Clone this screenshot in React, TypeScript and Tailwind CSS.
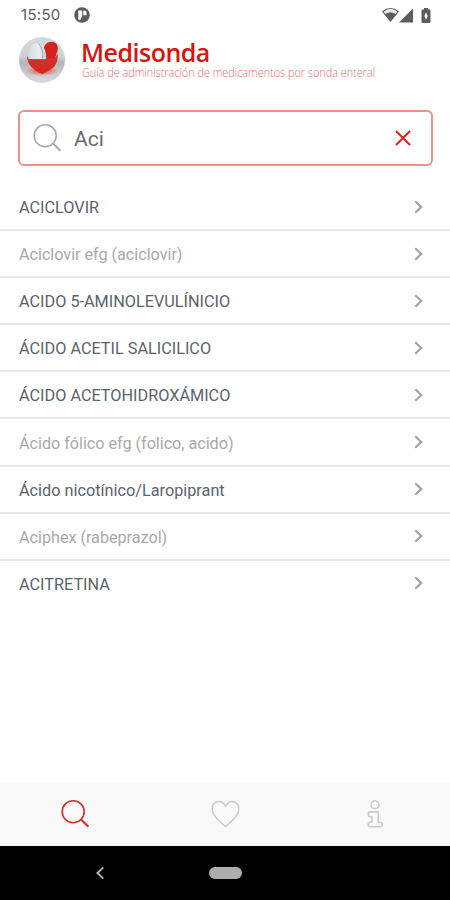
import { useState } from "react";
import clsx from "clsx";

type Medicine = {
  name: string;
  muted?: boolean;
};

const medicines: Medicine[] = [
  { name: "ACICLOVIR" },
  { name: "Aciclovir efg (aciclovir)", muted: true },
  { name: "ACIDO 5-AMINOLEVULÍNICIO" },
  { name: "ÁCIDO ACETIL SALICILICO" },
  { name: "ÁCIDO ACETOHIDROXÁMICO" },
  { name: "Ácido fólico efg (folico, acido)", muted: true },
  { name: "Ácido nicotínico/Laropiprant" },
  { name: "Aciphex (rabeprazol)", muted: true },
  { name: "ACITRETINA" },
];

const SearchIcon = ({ className }: { className?: string }) => (
  <svg
    width="30"
    height="30"
    viewBox="0 0 30 30"
    fill="none"
    stroke="currentColor"
    strokeWidth="1.6"
    className={className}
  >
    <circle cx="13.2" cy="12.7" r="11" />
    <path d="M20.8 20.2l7.6 7.6" strokeWidth="2" />
  </svg>
);

const StatusBar = () => (
  <div className="flex h-[30px] items-center justify-between pr-[19px] pl-[21px] text-[#5c5c5c]">
    <div className="flex items-center gap-[13px]">
      <span className="w-[40px] font-[Inter,sans-serif] text-[15px] leading-[30px] tracking-[0.3px] whitespace-nowrap">
        15:50
      </span>
      <svg width="16" height="16" viewBox="0 0 16 16">
        <circle cx="8" cy="8" r="7.8" fill="currentColor" />
        <path
          d="M4.3 3.6h3.9v6.9H6.8v2.2H4.3zM9.3 3.6h1.2a2 2 0 0 1 2 2v2.6H9.3z"
          fill="#fff"
        />
      </svg>
    </div>
    <div className="flex items-center">
      <svg width="17" height="16" viewBox="0 0 17 16">
        <path d="M0 4.5Q8.5-2.4 17 4.5L8.5 15z" fill="currentColor" />
        <path
          d="M1.6 4.7Q8.500-1 15.400 4.700L13.400 7.100Q8.500 3.600 3.600 7.100z"
          fill="#fff"
          opacity=".85"
        />
      </svg>
      <svg width="14" height="15" viewBox="0 0 14 15">
        <path d="M14 .5V14.5H0z" fill="currentColor" />
      </svg>
      <svg width="10" height="15" viewBox="0 0 10 15" className="ml-[8px]">
        <path
          d="M3 0h4v1.5h1.6q.9 0 .9.9v11.7q0 .9-.9.9H1.4q-.9 0-.9-.9V2.4q0-.9.9-.9H3z"
          fill="currentColor"
        />
        <path d="M5 4.300l1.600 3.700L5 11.700 3.400 8z" fill="#fff" />
      </svg>
    </div>
  </div>
);

const Logo = () => (
  <svg width="46" height="46" viewBox="0 0 46 46" className="shrink-0">
    <defs>
      <linearGradient id="disc" x1="0" y1="0" x2="0" y2="1">
        <stop offset="0" stopColor="#d2d9dc" />
        <stop offset=".42" stopColor="#cdd1d4" />
        <stop offset=".56" stopColor="#b3b5b9" />
        <stop offset=".78" stopColor="#cfcccd" />
        <stop offset="1" stopColor="#d8dbdd" />
      </linearGradient>
      <radialGradient id="glow">
        <stop offset="0" stopColor="#e23a2b" stopOpacity=".9" />
        <stop offset="1" stopColor="#e23a2b" stopOpacity="0" />
      </radialGradient>
      <linearGradient id="bowl" x1="0" y1="0" x2="0" y2="1">
        <stop offset="0" stopColor="#b8453f" />
        <stop offset=".35" stopColor="#cf3028" />
        <stop offset="1" stopColor="#d8241d" />
      </linearGradient>
      <linearGradient id="pill" x1="0" y1="0" x2="1" y2="0">
        <stop offset="0" stopColor="#d3dce0" />
        <stop offset=".6" stopColor="#e8eef0" />
        <stop offset="1" stopColor="#c6cfd4" />
      </linearGradient>
    </defs>
    <circle cx="23" cy="23" r="23" fill="url(#disc)" />
    <ellipse cx="23" cy="34" rx="17" ry="5" fill="url(#glow)" />
    <path
      d="M8 19l3 3.500h24l3.500-6q1 8-3.500 13.500Q29.500 34.500 23.300 37 16 34 12 29.500 8 25 8 19z"
      fill="url(#bowl)"
    />
    <path
      d="M24.500 12C25.500 7.500 28.500 4.700 32.300 4.700c5.400 0 7.600 4.800 6 9.800L35.500 22.500H26z"
      fill="#d5231c"
    />
    <path
      d="M9.500 22.300C8.500 13 11.500 6 17.500 5.900c6.400 0 10 6.600 9.700 16.400z"
      fill="url(#pill)"
    />
    <path
      d="M19.500 6.300q4.700 5.200 4.200 15"
      fill="none"
      stroke="#8d999f"
      strokeWidth=".8"
    />
    <path d="M10 22.500h25" fill="none" stroke="#9a4a48" strokeWidth=".8" />
  </svg>
);

const Header = () => (
  <header className="flex h-[60px] items-start pt-[7px] pl-[19px]">
    <Logo />
    <div className="ml-[16px] font-['Open_Sans',sans-serif] whitespace-nowrap">
      <h1 className="text-[25px] leading-[30px] font-semibold tracking-[-0.5px] text-[#d9140f]">
        Medisonda
      </h1>
      <p className="origin-left scale-x-[0.905] pl-[1px] text-[12px] leading-[12px] font-light text-[#ea6a68]">
        Guía de administración de medicamentos por sonda enteral
      </p>
    </div>
  </header>
);

const BottomTabs = () => (
  <nav className="grid h-[64px] shrink-0 grid-cols-3 bg-[#f9f9f9] text-[#cbcbcb]">
    <button className="flex items-center justify-center text-[#dc2b25]">
      <SearchIcon />
    </button>
    <button className="flex items-center justify-center">
      <svg
        width="30"
        height="28"
        viewBox="0 0 30 28"
        fill="none"
        stroke="currentColor"
        strokeWidth="1.5"
      >
        <path
          d="M15.5 26.5C8.5 20.5 2.2 15 2.2 8.7c0-4.1 2.8-7.1 6.5-7.1 3 0 5.4 1.7 6.8 4.8 1.4-3.1 3.8-4.8 6.8-4.8 3.7 0 6.5 3 6.5 7.1 0 6.3-6.3 11.8-13.3 17.8z"
          strokeLinejoin="round"
        />
      </svg>
    </button>
    <button className="flex items-center justify-center">
      <svg
        width="16"
        height="28"
        viewBox="0 0 16 28"
        fill="none"
        stroke="currentColor"
        strokeWidth="1.6"
        strokeLinejoin="round"
      >
        <circle cx="7.9" cy="4.7" r="3.9" />
        <path d="M2.9 11.9h8.3v10.3h2.4q1.7 0 1.7 2.3t-1.7 2.3H2.9q-1.7 0-1.7-2.3t1.7-2.3h2V16.500h-2q-1.700 0-1.700-2.300t1.700-2.300z" />
      </svg>
    </button>
  </nav>
);

const SystemNav = () => (
  <div className="grid h-[54px] shrink-0 grid-cols-[200px_50px_200px] items-center bg-black">
    <svg
      width="8"
      height="14"
      viewBox="0 0 8 14"
      className="ml-[96px]"
      fill="none"
      stroke="#b5b5b5"
      strokeWidth="1.9"
    >
      <path d="M7.3 1.4L1.5 7l5.8 5.6" />
    </svg>
    <div className="ml-[9px] h-[12px] w-[33px] rounded-full bg-[#adadad]" />
  </div>
);

const App = () => {
  const [query, setQuery] = useState("Aci");

  return (
    <div className="flex h-[900px] w-[450px] flex-col overflow-hidden bg-white font-[Roboto,sans-serif]">
      <StatusBar />
      <Header />
      <div className="mr-[17px] ml-[18px] mt-[20px] flex h-[56px] shrink-0 items-center rounded-[6px] border-2 border-[#ec908d] pr-[20px] pl-[12px]">
        <SearchIcon className="shrink-0 text-[#a9a9a9]" />
        <input
          value={query}
          onChange={(e) => setQuery(e.target.value)}
          className="ml-[12px] w-full min-w-0 pt-[3px] text-[21px] text-[#666b73] outline-none"
        />
        <button onClick={() => setQuery("")} className="shrink-0">
          <svg
            width="16"
            height="16"
            viewBox="0 0 16 16"
            stroke="#e0201b"
            strokeWidth="2"
          >
            <path d="M1 1l14 14M15 1L1 15" />
          </svg>
        </button>
      </div>
      <ul className="mt-[18px] flex-1">
        {medicines.map((medicine) => (
          <li
            key={medicine.name}
            className="flex h-[47.1px] items-center justify-between border-b-2 border-[#e8e8e8] pr-[27px] pl-[19px] last:border-transparent"
          >
            <span
              className={clsx(
                "pt-[3px] text-[16.25px] leading-[20px] whitespace-nowrap",
                medicine.muted
                  ? "tracking-[-0.05px] text-[#a9a9a9]"
                  : "text-[#5b636e]"
              )}
            >
              {medicine.name}
            </span>
            <svg
              width="9"
              height="14"
              viewBox="0 0 9 14"
              fill="none"
              stroke="#a3a3a3"
              strokeWidth="2.2"
            >
              <path d="M1.2 1.2L7.3 7l-6.1 5.8" />
            </svg>
          </li>
        ))}
      </ul>
      <BottomTabs />
      <SystemNav />
    </div>
  );
};

export default App;
